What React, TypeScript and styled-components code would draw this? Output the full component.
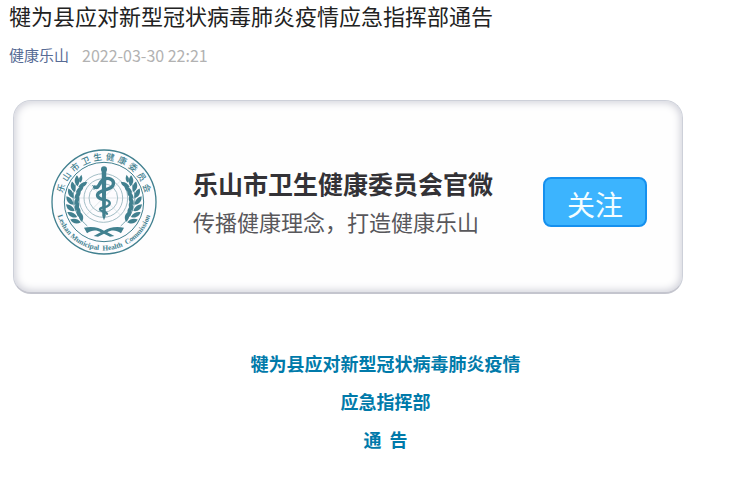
import React from "react";
import styled, { createGlobalStyle } from "styled-components";

const GlobalStyle = createGlobalStyle`
  * { box-sizing: border-box; }
  body {
    margin: 0;
    background: #fff;
    font-family: "Noto Sans CJK SC", "Noto Sans", sans-serif;
  }
`;

const Page = styled.main`
  padding: 0 0 40px;
`;

const Header = styled.header`
  padding: 0 9px;
`;

const Title = styled.h1`
  margin: 0;
  font-size: 22px;
  font-weight: 400;
  line-height: 30px;
  color: #222;
`;

const Meta = styled.div`
  display: flex;
  gap: 13px;
  margin-top: 15px;
  font-size: 15px;
  line-height: 20px;
`;

const Account = styled.a`
  color: #576b95;
  text-decoration: none;
`;

const Published = styled.time`
  font-size: 16px;
  color: #b2b2b2;
`;

const Banner = styled.section`
  display: flex;
  align-items: center;
  max-width: 670px;
  margin: 35px 13px 0;
  padding: 48px 35px 37px 37px;
  border-radius: 18px;
  border: 1px solid #cdd0d9;
  border-bottom: 2px solid #c4c5ce;
  background: #fefefe;
  box-shadow: inset 0 0 8px 1px #c9cad4;
`;

const Seal = styled.svg`
  flex: none;
  display: block;
  width: 106px;
  height: 106px;
`;

const BannerText = styled.div`
  flex: 1;
  margin-left: 36px;
  white-space: nowrap;
`;

const Organisation = styled.h2`
  margin: 0;
  font-size: 25px;
  font-weight: 700;
  line-height: 38px;
  color: #333236;
`;

const Slogan = styled.p`
  margin: 0;
  font-size: 22px;
  line-height: 38px;
  color: #58575b;
`;

const Follow = styled.button`
  flex: none;
  width: 104px;
  height: 50px;
  padding: 4px 0 0;
  border: 2px solid #1590ee;
  border-radius: 8px;
  background: #3cb4fe;
  color: #f4fdff;
  font-family: inherit;
  font-size: 28px;
  font-weight: 400;
  line-height: 42px;
`;

const Notice = styled.section`
  margin-top: 50px;
  padding-left: 15px;
  text-align: center;
`;

const NoticeLine = styled.p`
  margin: 0;
  font-size: 18px;
  font-weight: 700;
  line-height: 38px;
  color: #007aaa;
  white-space: pre-wrap;
`;

const TEAL = "#41808f";
const sealChars = [..."乐山市卫生健康委员会"];
const leafAngles = [0, 1, 2, 3, 4, 5, 6];

function Branch() {
  return (
    <g fill={TEAL}>
      <path
        d="M-70 -76 C-102 -34 -104 26 -50 72"
        fill="none"
        stroke={TEAL}
        strokeWidth="2"
      />
      <path d="M-68 -82 Q-80 -66 -72 -58 Q-60 -66 -68 -82Z" />
      {leafAngles.map((i) => {
        const deg = 214 - i * 12;
        const rad = (deg * Math.PI) / 180;
        const x = 92 * Math.cos(rad);
        const y = 92 * Math.sin(rad);
        return (
          <g key={i} transform={`translate(${x} ${y}) rotate(${deg - 180})`}>
            <path d="M0 5 C-15 4 -22 -8 -20 -21 C-9 -18 0 -9 0 5Z" />
            <path d="M3 6 C1 -9 8 -18 17 -21 C21 -9 15 2 3 6Z" />
          </g>
        );
      })}
    </g>
  );
}

function HealthSeal() {
  return (
    <Seal viewBox="-159 -159 318 318" role="img" aria-label="乐山市卫生健康委员会">
      <defs>
        <path id="seal-lower-arc" d="M-145 0 A145 145 0 0 0 145 0" />
      </defs>
      <circle r="156" fill="#fdfcfe" stroke={TEAL} strokeWidth="4" />
      <circle r="119" fill="none" stroke={TEAL} strokeWidth="3" />
      <g fill="none" stroke="#a3bec6" strokeWidth="3">
        <circle cx="-2" cy="-12" r="73" />
        <circle cx="-2" cy="-12" r="58" />
        <circle cx="-2" cy="-12" r="43" />
        <path d="M-75 -12H71M-54 -64L50 40M50 -64L-54 40" strokeWidth="1" />
      </g>
      <g
        fill={TEAL}
        fontFamily='"Noto Sans CJK SC", sans-serif'
        fontSize="26"
        fontWeight="500"
        textAnchor="middle"
      >
        {sealChars.map((char, i) => (
          <text key={i} y="-126" transform={`rotate(${-72 + i * 16})`}>
            {char}
          </text>
        ))}
      </g>
      <text
        fill={TEAL}
        fontFamily='"Liberation Serif", serif'
        fontSize="22"
        fontWeight="700"
        textAnchor="middle"
        xmlSpace="preserve"
      >
        <textPath href="#seal-lower-arc" startOffset="50%">
          Leshan Municipal  Health  Commission
        </textPath>
      </text>
      <Branch />
      <g transform="scale(-1 1)">
        <Branch />
      </g>
      <path
        d="M-60 77 C-34 72 -14 77 0 86 C14 77 34 72 60 77 L51 94 C36 83 22 83 10 91 L31 102 L18 104 L0 95 L-18 104 L-31 102 L-10 91 C-22 83 -36 83 -51 94Z"
        fill={TEAL}
      />
      <path d="M-7 -98H7L5 42L0 55L-5 42Z" fill={TEAL} />
      <circle cy="-98" r="9" fill={TEAL} />
      <g fill="none" stroke={TEAL} strokeLinecap="round">
        <path
          d="M-28 -45 C-13 -37 -17 -61 0 -68 C15 -75 31 -67 28 -53 C25 -37 -2 -38 -14 -29 C-25 -20 -18 -9 0 -7"
          strokeWidth="10"
        />
        <path d="M0 -7 C20 -5 22 7 9 13 C-3 17 -13 17 -12 23 C-10 29 5 27 9 35" strokeWidth="7" />
        <path d="M-28 -45 L-34 -49 M-28 -45 L-30 -38" strokeWidth="3" />
      </g>
    </Seal>
  );
}

export default function App() {
  return (
    <>
      <GlobalStyle />
      <Page>
        <Header>
          <Title>犍为县应对新型冠状病毒肺炎疫情应急指挥部通告</Title>
          <Meta>
            <Account href="#account">健康乐山</Account>
            <Published dateTime="2022-03-30T22:21">2022-03-30 22:21</Published>
          </Meta>
        </Header>
        <Banner>
          <HealthSeal />
          <BannerText>
            <Organisation>乐山市卫生健康委员会官微</Organisation>
            <Slogan>传播健康理念，打造健康乐山</Slogan>
          </BannerText>
          <Follow type="button">关注</Follow>
        </Banner>
        <Notice>
          <NoticeLine>犍为县应对新型冠状病毒肺炎疫情</NoticeLine>
          <NoticeLine>应急指挥部</NoticeLine>
          <NoticeLine>{"通  告"}</NoticeLine>
        </Notice>
      </Page>
    </>
  );
}
